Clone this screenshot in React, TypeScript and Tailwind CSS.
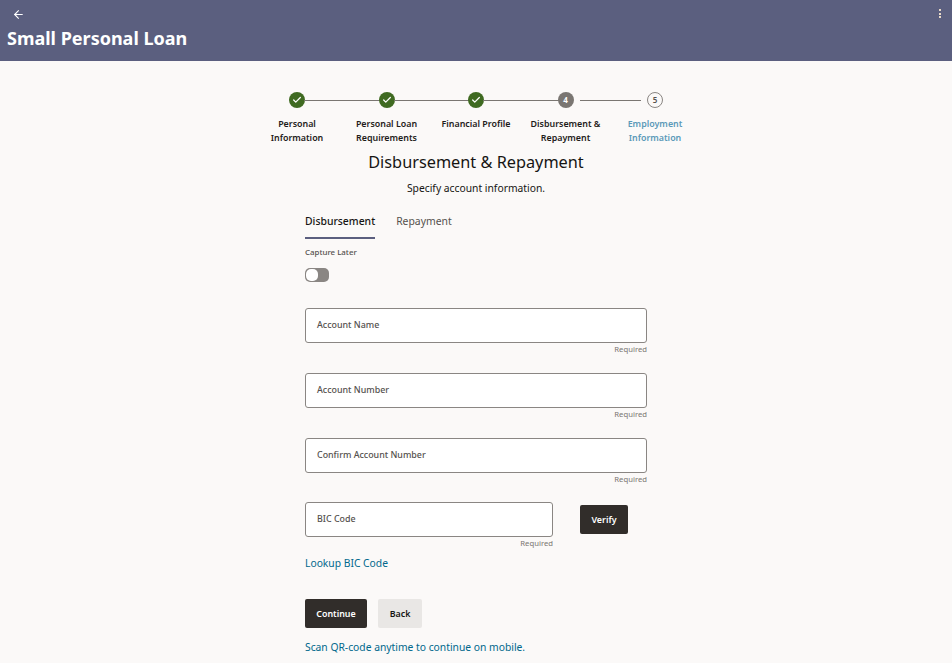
import { ArrowLeft, Check } from "lucide-react";

const font = "font-['Noto_Sans',sans-serif]";

const steps = [
  { label: ["Personal", "Information"], state: "done" },
  { label: ["Personal Loan", "Requirements"], state: "done" },
  { label: ["Financial Profile"], state: "done" },
  { label: ["Disbursement &", "Repayment"], state: "current", num: 4 },
  { label: ["Employment", "Information"], state: "todo", num: 5 },
];

const Step = ({ step, index }: { step: (typeof steps)[number]; index: number }) => (
  <div className="relative flex w-[89.5px] flex-col items-center">
    {index < 4 && (
      <div
        className={
          index === 3
            ? "absolute top-[8px] left-[59px] h-px w-[61px] bg-[#7a7672]"
            : "absolute top-[8px] left-[52px] h-px w-[76px] bg-[#7a7672]"
        }
      />
    )}
    {step.state === "done" && (
      <div className="flex h-[16px] w-[16px] items-center justify-center rounded-full bg-[#3f6a21] text-white">
        <Check size={10} strokeWidth={3} />
      </div>
    )}
    {step.state === "current" && (
      <div className="flex h-[16px] w-[16px] items-center justify-center rounded-full bg-[#7a7672] text-[8px] font-bold text-white">
        {step.num}
      </div>
    )}
    {step.state === "todo" && (
      <div className="flex h-[16px] w-[16px] items-center justify-center rounded-full border border-[#8a8683] text-[8px] font-semibold text-[#55514e]">
        {step.num}
      </div>
    )}
    <div
      className={
        step.state === "todo"
          ? "mt-[9px] text-center text-[8.9px] leading-[14px] font-semibold whitespace-nowrap text-[#5b9ab8]"
          : "mt-[9px] text-center text-[8.9px] leading-[14px] font-semibold whitespace-nowrap text-[#1f1c1a]"
      }
    >
      {step.label.map((l) => (
        <div key={l}>{l}</div>
      ))}
    </div>
  </div>
);

const Field = ({ label, className }: { label: string; className: string }) => (
  <div className={className}>
    <div className="flex h-[35px] items-center rounded-[3px] border border-[#8a8683] bg-white pb-[1px] pl-[11px] text-[8.9px] font-medium text-[#55514e]">
      {label}
    </div>
    <div className="mt-[1px] text-right text-[7.7px] leading-[11px] text-[#7a7672]">Required</div>
  </div>
);

export default function App() {
  return (
    <div className={`${font} h-[663px] w-[952px] overflow-hidden bg-[#fbf9f8]`}>
      <header className="relative h-[61px] bg-[#5b5f7f] pt-[8px] pl-[12px] text-white">
        <ArrowLeft size={13} strokeWidth={2} />
        <h1 className="mt-[4px] -ml-[5px] text-[18px] leading-[26px] font-bold">Small Personal Loan</h1>
        <div className="absolute top-[9px] right-[11px] flex flex-col gap-[1.5px]">
          <span className="h-[2px] w-[2px] bg-[#e8d9c8]" />
          <span className="h-[2px] w-[2px] bg-[#e8d9c8]" />
          <span className="h-[2px] w-[2px] bg-[#e8d9c8]" />
        </div>
      </header>

      <main className="flex flex-col items-center pt-[31px]">
        <div className="flex justify-center">
          {steps.map((s, i) => (
            <Step key={i} step={s} index={i} />
          ))}
        </div>

        <h2 className="mt-[5px] text-[16.3px] leading-[24px] text-[#161513]">Disbursement &amp; Repayment</h2>
        <p className="mt-[7px] text-[10.3px] leading-[14px] text-[#161513]">Specify account information.</p>

        <div className="mt-[18px] w-[342px]">
          <div className="flex gap-[21px] text-[10.4px]">
            <div className="h-[26px] border-b-2 border-[#5b5f7f] pt-[1px] font-medium text-[#161513]">Disbursement</div>
            <div className="pt-[1px] text-[#55514e]">Repayment</div>
          </div>
          <div className="mt-[8px] text-[7.9px] leading-[11px] font-medium text-[#55514e]">Capture Later</div>
          <div className="mt-[10px] flex h-[14px] w-[24px] items-center rounded-[5px] bg-[#8a8683] pl-[1px]">
            <div className="h-[12px] w-[12px] rounded-[5px] bg-white" />
          </div>

          <Field label="Account Name" className="mt-[26px]" />
          <Field label="Account Number" className="mt-[18px]" />
          <Field label="Confirm Account Number" className="mt-[18px]" />

          <div className="mt-[17px] flex">
            <Field label="BIC Code" className="w-[248px]" />
            <button className="mt-[3px] ml-[27px] h-[29px] w-[48px] rounded-[2px] bg-[#312d2a] text-[8.9px] font-semibold text-white">
              Verify
            </button>
          </div>

          <div className="mt-[7px] text-[10.3px] leading-[15px] text-[#00688c]">Lookup BIC Code</div>

          <div className="mt-[28px] flex gap-[11px]">
            <button className="h-[29px] w-[62px] rounded-[2px] bg-[#312d2a] text-[8.9px] font-semibold text-white">
              Continue
            </button>
            <button className="h-[29px] w-[44px] rounded-[2px] bg-[#e9e7e5] text-[8.9px] font-semibold text-[#161513]">
              Back
            </button>
          </div>

          <div className="mt-[12px] text-[10.3px] leading-[15px] text-[#00688c]">Scan QR-code anytime to continue on mobile.</div>
        </div>
      </main>
    </div>
  );
}
